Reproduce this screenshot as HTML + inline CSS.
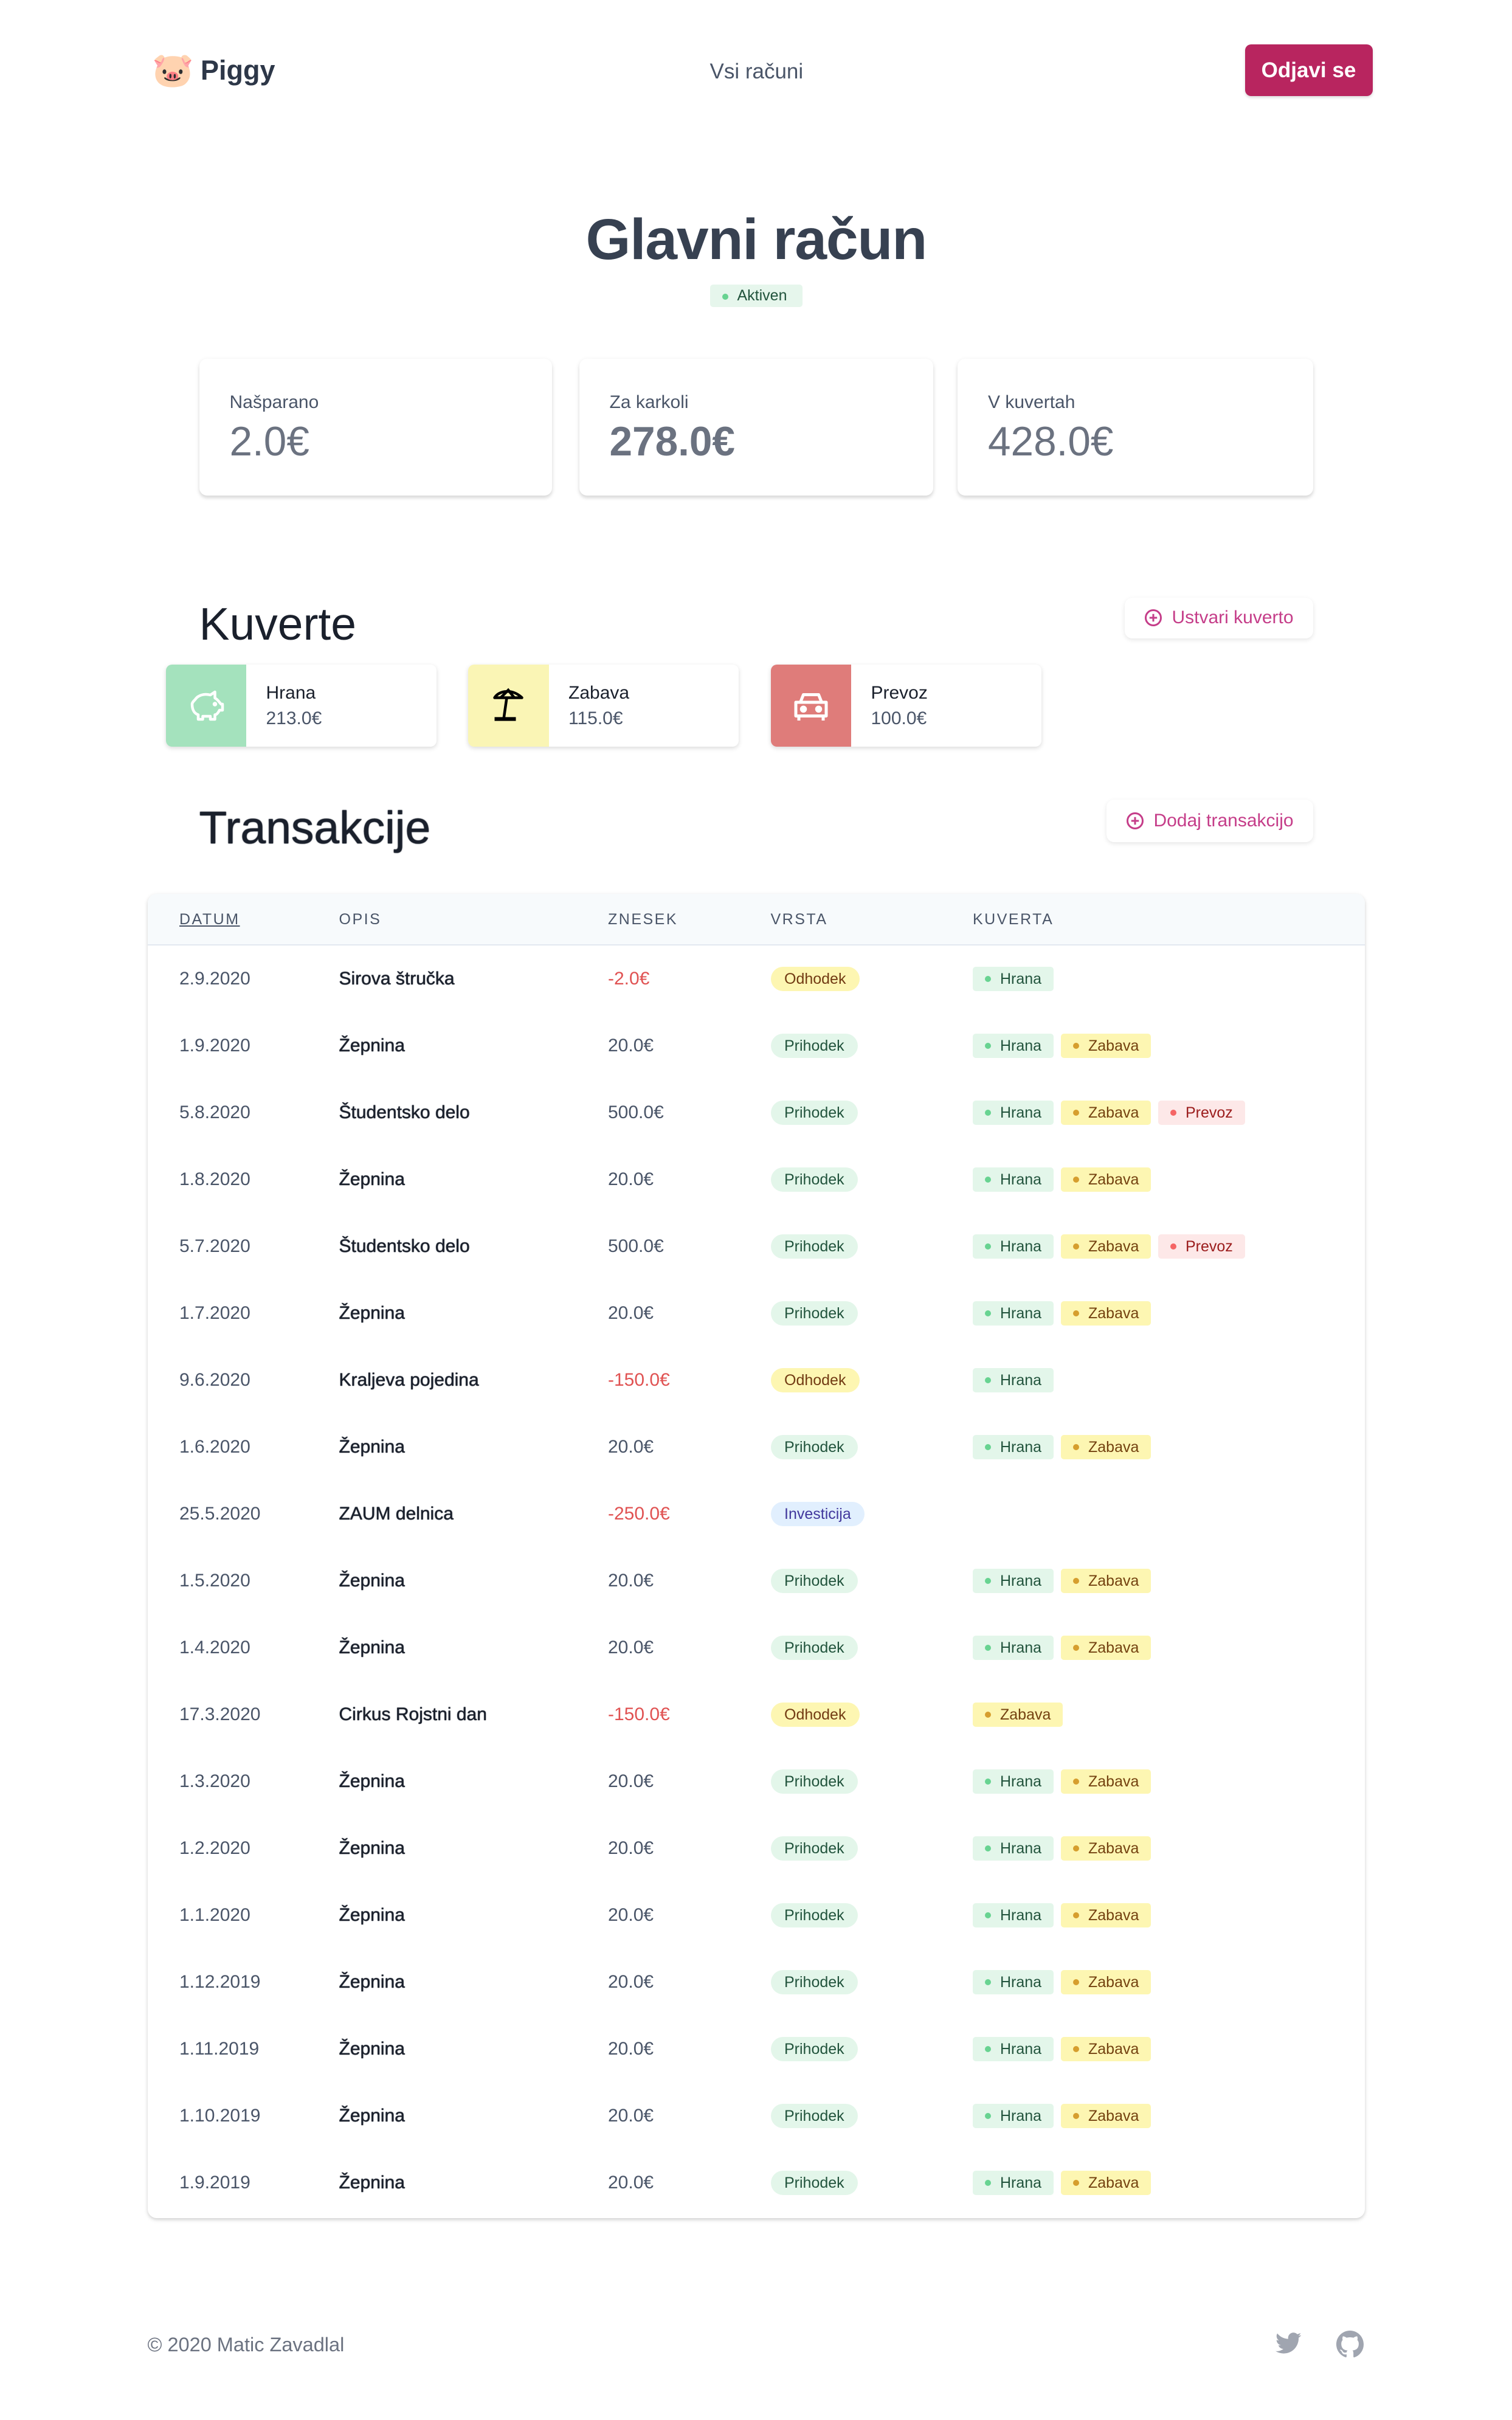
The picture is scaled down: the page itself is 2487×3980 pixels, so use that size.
<!DOCTYPE html>
<html><head><meta charset="utf-8">
<style>
html,body{margin:0;padding:0;background:#fff;}
body{width:2487px;height:3980px;overflow:hidden;}
#w{zoom:2.5;width:995px;height:1592px;position:relative;font-family:"Liberation Sans",sans-serif;color:#1a202c;}
.a{position:absolute;}
.card{position:absolute;background:#fff;border-radius:5px;box-shadow:0 1px 3px rgba(0,0,0,.12),0 2px 2px rgba(0,0,0,.06);}
.lbl{font-size:12px;color:#4a5568;}
.val{font-size:27px;color:#6b7280;}
.btn2{position:absolute;background:#fff;border-radius:5px;box-shadow:0 1px 3px rgba(0,0,0,.1);color:#c53d89;font-size:12px;display:flex;align-items:center;justify-content:center;gap:6px;}
.env{position:absolute;height:54px;width:178px;top:437px;border-radius:4px;box-shadow:0 1px 3px rgba(0,0,0,.15);background:#fff;overflow:hidden;}
.env .ic{position:absolute;left:0;top:0;width:53px;height:54px;display:flex;align-items:center;justify-content:center;}
.env .n{position:absolute;left:66px;top:12px;font-size:12px;color:#1a202c;}
.env .m{position:absolute;left:66px;top:29px;font-size:12px;color:#4a5568;}
.tbl{position:absolute;left:97px;top:588px;width:801px;height:871px;border-radius:6px;box-shadow:0 1px 3px rgba(0,0,0,.12),0 1px 2px rgba(0,0,0,.08);overflow:hidden;background:#fff;}
.th{position:absolute;left:0;top:0;width:100%;height:33px;background:#f7fafc;border-bottom:1px solid #e2e8f0;}
.th span{position:absolute;top:11px;font-size:10px;letter-spacing:1px;color:#4a5568;}
.r{position:absolute;left:0;width:100%;height:44px;font-size:12px;}
.r span{position:absolute;top:0;line-height:44px;}
.d{left:21px;color:#4a5568;}
.o{left:126px;color:#1a202c;text-shadow:0 0 .4px #1a202c,0 0 .4px #1a202c;}
.z{left:303px;color:#4a5568;}
.z.neg{color:#e05252;}
.p{position:absolute;top:14px;height:16px;line-height:16px;font-size:10px;border-radius:8px;padding:0 9px;}
.pr{background:#e3f6ea;color:#22543d;}
.od{background:#fdf6b2;color:#723b13;}
.iv{background:#e1effe;color:#42389d;}
.k{position:absolute;top:14px;height:16px;line-height:16px;font-size:10px;border-radius:2px;padding:0 8px 0 18px;}
.k:before{content:"";position:absolute;left:8px;top:6px;width:4px;height:4px;border-radius:2px;}
.kh{background:#e3f6ea;color:#22543d;}.kh:before{background:#68d391;}
.kz{background:#fdf6b2;color:#744210;}.kz:before{background:#d69e2e;}
.kp{background:#fde8e8;color:#9b1c1c;}.kp:before{background:#f56565;}
</style></head><body><div id="w">
<div class="a" style="left:100px;top:33px;font-size:22px;line-height:26px;">🐷</div>
<div class="a" style="left:132px;top:36px;font-size:18px;font-weight:bold;color:#2d3748;">Piggy</div>
<div class="a" style="left:467px;top:39px;font-size:14px;color:#4a5568;">Vsi računi</div>
<div class="a" style="left:819px;top:29px;width:84px;height:34px;background:#b8255f;border-radius:4px;color:#fff;font-size:14px;font-weight:bold;line-height:34px;text-align:center;box-shadow:0 1px 2px rgba(0,0,0,.15);">Odjavi se</div>

<div class="a" style="left:0;width:995px;top:136px;text-align:center;font-size:38px;font-weight:bold;color:#374151;letter-spacing:-0.5px;">Glavni račun</div>
<div class="a" style="left:467px;top:187px;width:61px;height:15px;background:#e6f6ec;border-radius:2px;font-size:10px;line-height:15px;color:#22543d;"><span style="position:absolute;left:8px;top:6px;width:4px;height:4px;border-radius:2px;background:#68d391"></span><span style="position:absolute;left:18px">Aktiven</span></div>

<div class="card" style="left:131px;top:236px;width:232px;height:90px;"><div class="a lbl" style="left:20px;top:22px">Našparano</div><div class="a val" style="left:20px;top:39px">2.0€</div></div>
<div class="card" style="left:381px;top:236px;width:233px;height:90px;"><div class="a lbl" style="left:20px;top:22px">Za karkoli</div><div class="a val" style="left:20px;top:39px;font-weight:bold">278.0€</div></div>
<div class="card" style="left:630px;top:236px;width:234px;height:90px;"><div class="a lbl" style="left:20px;top:22px">V kuvertah</div><div class="a val" style="left:20px;top:39px">428.0€</div></div>

<div class="a" style="left:131px;top:393px;font-size:30px;color:#1a202c;">Kuverte</div>
<div class="btn2" style="left:740px;top:393px;width:124px;height:27px;"><svg width="12" height="12" viewBox="0 0 12 12"><circle cx="6" cy="6" r="5" fill="none" stroke="#c53d89" stroke-width="1.2"/><path d="M6 3.5v5M3.5 6h5" stroke="#c53d89" stroke-width="1.2"/></svg>Ustvari kuverto</div>

<div class="env" style="left:109px;"><div class="ic" style="background:#a4e2bd"><svg width="26" height="26" viewBox="0 0 26 26" fill="none" stroke="#fff" stroke-width="1.8" stroke-linejoin="round"><path d="M6 9c2-3 6-4 10-3l3-2v4c2 1 3 3 4 4h1v4h-2c-1 2-2 3-3 3v3h-3v-2h-5v2H8v-3c-3-1-4-4-4-7 0-1 1-2 2-3z"/><circle cx="19" cy="12" r=".6" fill="#fff"/></svg></div><div class="n">Hrana</div><div class="m">213.0€</div></div>
<div class="env" style="left:308px;"><div class="ic" style="background:#faf5b5"><svg width="28" height="28" viewBox="0 0 28 28" fill="none" stroke="#000" stroke-width="1.8"><path d="M5 9c3-5 12-6 18 0z" stroke-linejoin="round"/><path d="M9 9l5-5 4 5"/><path d="M13 9l-2 14"/><path d="M5 23h14" stroke-width="2.5"/></svg></div><div class="n">Zabava</div><div class="m">115.0€</div></div>
<div class="env" style="left:507px;"><div class="ic" style="background:#df7c7a"><svg width="28" height="28" viewBox="0 0 28 28" fill="none" stroke="#fff" stroke-width="2" stroke-linejoin="round"><path d="M4 12h20v9H4z"/><path d="M7 12l2-5h10l2 5"/><path d="M6 21v3M22 21v3"/><circle cx="9" cy="16.5" r="1.3" fill="#fff"/><circle cx="19" cy="16.5" r="1.3" fill="#fff"/></svg></div><div class="n">Prevoz</div><div class="m">100.0€</div></div>

<div class="a" style="left:131px;top:527px;font-size:30px;color:#1a202c;text-shadow:0 0 .6px #1a202c,0 0 .6px #1a202c;">Transakcije</div>
<div class="btn2" style="left:728px;top:526px;width:136px;height:28px;"><svg width="12" height="12" viewBox="0 0 12 12"><circle cx="6" cy="6" r="5" fill="none" stroke="#c53d89" stroke-width="1.2"/><path d="M6 3.5v5M3.5 6h5" stroke="#c53d89" stroke-width="1.2"/></svg>Dodaj transakcijo</div>

<div class="tbl">
<div class="th"><span style="left:21px;text-decoration:underline">DATUM</span><span style="left:126px">OPIS</span><span style="left:303px">ZNESEK</span><span style="left:410px">VRSTA</span><span style="left:543px">KUVERTA</span></div>
<div id="rows"></div>
</div>

<div class="a" style="left:97px;top:1535px;font-size:13px;color:#6b7280;">© 2020 Matic Zavadlal</div>
<svg class="a" style="left:839px;top:1534px" width="17" height="15" viewBox="0 0 24 20"><path fill="#a0a5b0" d="M24 2.4a9.8 9.8 0 0 1-2.8.8A4.9 4.9 0 0 0 23.3.5a9.9 9.9 0 0 1-3.1 1.2A4.9 4.9 0 0 0 11.8 6 14 14 0 0 1 1.7.9a4.9 4.9 0 0 0 1.5 6.6 4.9 4.9 0 0 1-2.200-.6v.1a4.9 4.9 0 0 0 3.9 4.8 4.9 4.9 0 0 1-2.2.1 4.9 4.9 0 0 0 4.6 3.4A9.9 9.9 0 0 1 0 17.3 14 14 0 0 0 7.5 19.5c9.1 0 14-7.5 14-14v-.6A10 10 0 0 0 24 2.4z"/></svg>
<svg class="a" style="left:879px;top:1533px" width="18" height="18" viewBox="0 0 16 16"><path fill="#a0a5b0" d="M8 0C3.580 0 0 3.58 0 8c0 3.54 2.29 6.53 5.47 7.59.4.07.55-.17.55-.38v-1.33c-2.23.48-2.7-1.07-2.7-1.07-.36-.92-.89-1.17-.89-1.170-.73-.5.05-.49.05-.49.8.06 1.23.83 1.23.83.72 1.23 1.88.87 2.34.67.07-.52.28-.87.51-1.07-1.78-.2-3.64-.89-3.64-3.95 0-.87.31-1.59.82-2.15-.08-.2-.36-1.02.08-2.12 0 0 .67-.21 2.2.82.64-.18 1.32-.27 2-.27.68 0 1.36.09 2 .27 1.53-1.04 2.2-.82 2.2-.82.44 1.1.16 1.92.08 2.12.51.56.82 1.27.82 2.15 0 3.07-1.87 3.75-3.65 3.95.29.25.54.73.54 1.48v2.2c0 .21.15.46.55.38A8.01 8.01 0 0 0 16 8c0-4.42-3.58-8-8-8z"/></svg>
</div>
<script>
var R=[["2.9.2020","Sirova štručka","-2.0€","od","h"],["1.9.2020","Žepnina","20.0€","pr","hz"],["5.8.2020","Študentsko delo","500.0€","pr","hzp"],["1.8.2020","Žepnina","20.0€","pr","hz"],["5.7.2020","Študentsko delo","500.0€","pr","hzp"],["1.7.2020","Žepnina","20.0€","pr","hz"],["9.6.2020","Kraljeva pojedina","-150.0€","od","h"],["1.6.2020","Žepnina","20.0€","pr","hz"],["25.5.2020","ZAUM delnica","-250.0€","iv",""],["1.5.2020","Žepnina","20.0€","pr","hz"],["1.4.2020","Žepnina","20.0€","pr","hz"],["17.3.2020","Cirkus Rojstni dan","-150.0€","od","z"],["1.3.2020","Žepnina","20.0€","pr","hz"],["1.2.2020","Žepnina","20.0€","pr","hz"],["1.1.2020","Žepnina","20.0€","pr","hz"],["1.12.2019","Žepnina","20.0€","pr","hz"],["1.11.2019","Žepnina","20.0€","pr","hz"],["1.10.2019","Žepnina","20.0€","pr","hz"],["1.9.2019","Žepnina","20.0€","pr","hz"]];
var T={od:"Odhodek",pr:"Prihodek",iv:"Investicija"},h="";
R.forEach(function(r,i){var neg=r[2][0]=="-";var s='<div class="r" style="top:'+(34+i*44)+'px"><span class="d">'+r[0]+'</span><span class="o">'+r[1]+'</span><span class="z'+(neg?' neg':'')+'">'+r[2]+'</span><div class="p '+r[3]+'" style="left:410px">'+T[r[3]]+'</div>';
var x=543;if(r[4].indexOf("h")>=0){s+='<div class="k kh" style="left:'+x+'px">Hrana</div>';x+=58;}if(r[4].indexOf("z")>=0){s+='<div class="k kz" style="left:'+x+'px">Zabava</div>';x+=64;}if(r[4].indexOf("p")>=0){s+='<div class="k kp" style="left:'+x+'px">Prevoz</div>';}
h+=s+'</div>';});
document.getElementById("rows").innerHTML=h;
</script>
</body></html>
